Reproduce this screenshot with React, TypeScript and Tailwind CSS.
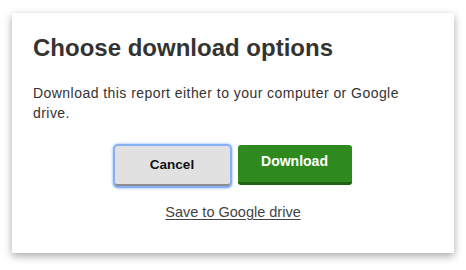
export default function App() {
  return (
    <div className="h-[270px] w-[466px] bg-white pl-3 pt-[13px] font-['Liberation_Sans',Arial,sans-serif]">
      <div className="w-[442px] h-[240px] bg-white px-[21px] pt-[19px] shadow-[0_3px_8px_rgba(0,0,0,0.35)]">
        <h2 className="text-[24px] leading-8 font-bold text-[#333]">Choose download options</h2>
        <p className="mt-[19px] max-w-[390px] text-[14px] leading-5 tracking-[0.45px] text-[#333]">
          Download this report either to your computer or Google drive.
        </p>

        <div className="mt-[22px] flex items-start justify-center gap-2">
          <button className="mt-px h-10 w-[115px] rounded-[3px] border-b-2 border-[#8c8c8c] bg-[#e1e1e1] text-[13.5px] font-bold text-[#111] shadow-[0_0_0_2px_#86aff5,0_0_2px_3px_rgba(134,175,245,0.5)]">
            Cancel
          </button>
          <button className="h-10 w-[114px] rounded-[3px] border-b-[3px] border-[#1d6312] bg-[#2e8a1f] pb-1 text-[14px] font-bold text-white">
            Download
          </button>
        </div>

        <div className="mt-4 text-center leading-5">
          <a className="text-[14.5px] text-[#444] underline underline-offset-2">Save to Google drive</a>
        </div>
      </div>
    </div>
  );
}
